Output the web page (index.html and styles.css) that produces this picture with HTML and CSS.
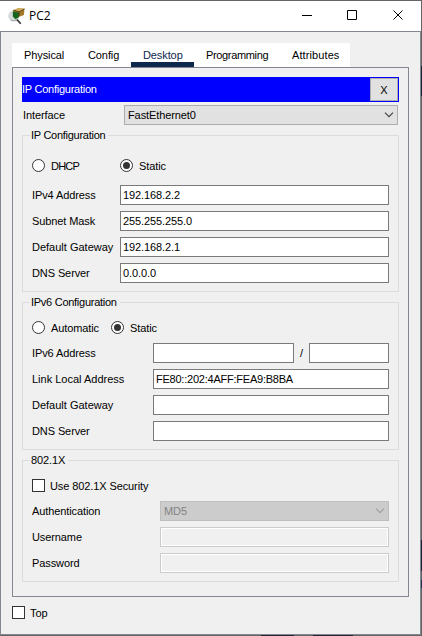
FILE: index.html
```html
<!DOCTYPE html>
<html lang="en">
<head>
<meta charset="utf-8">
<title>PC2</title>
<link rel="stylesheet" href="styles.css">
</head>
<body>
<div class="window">
  <header class="titlebar">
    <svg class="app-icon" width="17" height="17" viewBox="0 0 16 16">
      <ellipse cx="5.500" cy="7.500" rx="5.300" ry="5.200" fill="#d5dada"/>
      <path d="M5 2 9.500 .3 15.500 .8 15 6.500 10 8.500 5.500 7z" fill="#a77a29"/>
      <path d="M5 2 9.500 .3 15.500 .8 10.500 3.500z" fill="#d5ad58"/>
      <path d="M4.500 3 10.500 4.500 10 9 7 10.500 4.500 8z" fill="#14651d"/>
      <path d="M5 2 10.500 3.700 15.500 1M10.500 3.700V7.500" fill="none" stroke="#493714" stroke-width=".8"/>
      <path d="M2.500 11Q6 13 9 10.500" fill="none" stroke="#a9aeae"/>
      <path d="M8.500 11 12 14.800" stroke="#343a38" stroke-width="1.600"/>
    </svg>
    <h1 class="title">PC2</h1>
    <svg class="controls" width="102" height="12" viewBox="0 0 102 12" fill="none" stroke="#000">
      <path d="M0 6.500h10M45.500 1.500h9v9h-9z"/>
      <path d="M91.500 1.500l9 9M100.500 1.500l-9 9"/>
    </svg>
  </header>
  <main class="content">
    <nav class="tabs">
      <span class="tab physical">Physical</span>
      <span class="tab config">Config</span>
      <span class="tab desktop active">Desktop</span>
      <span class="tab programming">Programming</span>
      <span class="tab attributes">Attributes</span>
    </nav>
    <section class="panel">
      <div class="banner"><span>IP Configuration</span><button class="close">X</button></div>
      <div class="interface"><span>Interface</span>
        <div class="select"><span>FastEthernet0</span><svg width="10" height="6" viewBox="0 0 10 6"><path d="M1 .7 5 4.700 9 .7"/></svg></div>
      </div>
      <section class="group ipv4">
        <h2 class="legend">IP Configuration</h2>
        <div class="options"><span class="radio"></span><span class="option">DHCP</span><span class="radio on"></span><span>Static</span></div>
        <div class="row"><span>IPv4 Address</span><div class="field">192.168.2.2</div></div>
        <div class="row"><span>Subnet Mask</span><div class="field">255.255.255.0</div></div>
        <div class="row"><span class="gateway">Default Gateway</span><div class="field">192.168.2.1</div></div>
        <div class="row"><span>DNS Server</span><div class="field">0.0.0.0</div></div>
      </section>
      <section class="group ipv6">
        <h2 class="legend">IPv6 Configuration</h2>
        <div class="options"><span class="radio"></span><span class="option">Automatic</span><span class="radio on"></span><span>Static</span></div>
        <div class="row"><span>IPv6 Address</span><div class="address"><div class="field"></div><span>/</span><div class="field"></div></div></div>
        <div class="row"><span class="gateway">Link Local Address</span><div class="field link-local">FE80::202:4AFF:FEA9:B8BA</div></div>
        <div class="row"><span class="gateway">Default Gateway</span><div class="field"></div></div>
        <div class="row"><span>DNS Server</span><div class="field"></div></div>
      </section>
      <section class="group dot1x">
        <h2 class="legend">802.1X</h2>
        <div class="check-row"><span class="checkbox"></span><span>Use 802.1X Security</span></div>
        <div class="row"><span>Authentication</span><div class="select disabled"><span>MD5</span><svg width="10" height="6" viewBox="0 0 10 6"><path d="M1 .7 5 4.700 9 .7"/></svg></div></div>
        <div class="row"><span>Username</span><div class="field disabled"></div></div>
        <div class="row"><span>Password</span><div class="field disabled"></div></div>
      </section>
    </section>
    <footer class="check-row top"><span class="checkbox"></span><span>Top</span></footer>
  </main>
</div>
</body>
</html>
```
FILE: styles.css
```css
* { box-sizing: border-box; }
body {
  margin: 0;
  width: 422px;
  height: 636px;
  overflow: hidden;
  background:
    linear-gradient(#1c1e32, #1c1e32) 421px 66px / 1px 30px no-repeat,
    linear-gradient(#1c1e32, #1c1e32) 421px 540px / 1px 31px no-repeat,
    linear-gradient(#252a50, #252a50) 421px 580px / 1px 8px no-repeat,
    linear-gradient(#25232e, #25232e) 261px 635px / 33px 1px no-repeat,
    linear-gradient(#25232e, #25232e) 313px 635px / 40px 1px no-repeat,
    #646464;
  color: #000;
  font: 11px/20px "Liberation Sans", Arial, sans-serif;
  letter-spacing: -.1px;
  white-space: nowrap;
}
.window { width: 421px; height: 635px; padding-top: 1px; }
.titlebar {
  display: flex;
  align-items: flex-start;
  height: 30px;
  padding: 7px 17px 0 8px;
  background: #fff;
}
.title { margin: -1px 0 0 4px; font: 12px/18px "Open Sans", sans-serif; letter-spacing: 0; }
.controls { margin: 1px 0 0 auto; }
.content {
  height: 604px;
  padding: 11px 11px 0;
  border: 1px solid #828790;
  background: #f0f0f0;
}
.tabs { display: flex; width: 338px; height: 24px; background: #fff; }
.tab { height: 24px; line-height: 24px; padding-left: 12px; }
.physical { width: 64px; }
.config { width: 55px; }
.desktop { width: 63px; }
.programming { width: 86px; letter-spacing: -.35px; }
.attributes { width: 70px; letter-spacing: .1px; }
.active { color: #0d274d; border-bottom: 5px solid #0d274d; }
.panel { width: 397px; height: 530px; padding: 9px; border: 1px solid #828790; }
.banner {
  display: flex;
  justify-content: space-between;
  width: 377px;
  height: 25px;
  padding: 1px 1px 1px 0;
  line-height: 23px;
  letter-spacing: -.25px;
  color: #fff;
  background: #00f;
}
.close {
  width: 28px;
  height: 23px;
  padding: 0;
  border: 1px solid #adadad;
  background: #e1e1e1;
  color: #000;
  font: inherit;
}
.interface { display: grid; grid-template-columns: 101px 274px; margin-top: 3px; padding-left: 1px; }
.select {
  display: flex;
  align-items: center;
  justify-content: space-between;
  height: 20px;
  padding: 0 3px;
  border: 1px solid #adadad;
  background: #e1e1e1;
}
.select svg { fill: none; stroke: #444; stroke-width: 1.2; }
.select.disabled { background: #ccc; border-color: #bfbfbf; color: #838383; }
.select.disabled svg { stroke: #a0a0a0; }
.group { width: 377px; margin-top: 10px; padding: 0 9px; border: 1px solid #dcdcdc; }
.ipv4 { height: 157px; }
.ipv6 { height: 148px; }
.dot1x { height: 122px; }
.legend {
  width: max-content;
  height: 20px;
  margin: -11px 0 0 -2px;
  padding: 0 3px 0 1px;
  background: #f0f0f0;
  font: inherit;
  letter-spacing: -.27px;
}
.dot1x .legend { letter-spacing: -.1px; }
.options { display: flex; align-items: center; height: 20px; }
.ipv4 .options { margin: 11px 0 9px; }
.ipv6 .options { margin: 6px 0 5px; }
.radio {
  display: grid;
  place-items: center;
  width: 13px;
  height: 13px;
  margin: 0 6px 1px 0;
  border: 1px solid #333;
  border-radius: 50%;
  background: #fff;
}
.on::after { content: ""; width: 7px; height: 7px; border-radius: 50%; background: #333; }
.ipv4 .option { width: 69px; letter-spacing: -.8px; }
.ipv6 .option { width: 60px; }
.row { display: grid; height: 20px; margin-bottom: 6px; }
.ipv4 .row { grid-template-columns: 88px 269px; }
.ipv6 .row { grid-template-columns: 121px 236px; }
.dot1x .row { grid-template-columns: 128px 229px; }
.gateway { letter-spacing: 0; }
.field { height: 20px; padding-left: 2px; border: 1px solid #7a7a7a; background: #fff; line-height: 19px; }
.link-local { letter-spacing: -.23px; }
.field.disabled { border-color: #ccc; background: #f0f0f0; box-shadow: inset 0 0 0 1px #fff; }
.address { display: grid; grid-template-columns: 141px 15px 80px; }
.address span { padding-left: 6px; }
.check-row { display: flex; align-items: center; gap: 5px; height: 20px; }
.dot1x .check-row { margin: 6px 0 5px; }
.checkbox { width: 13px; height: 13px; margin-bottom: 1px; border: 1px solid #333; background: #fff; }
.top { margin-top: 6px; }
```
